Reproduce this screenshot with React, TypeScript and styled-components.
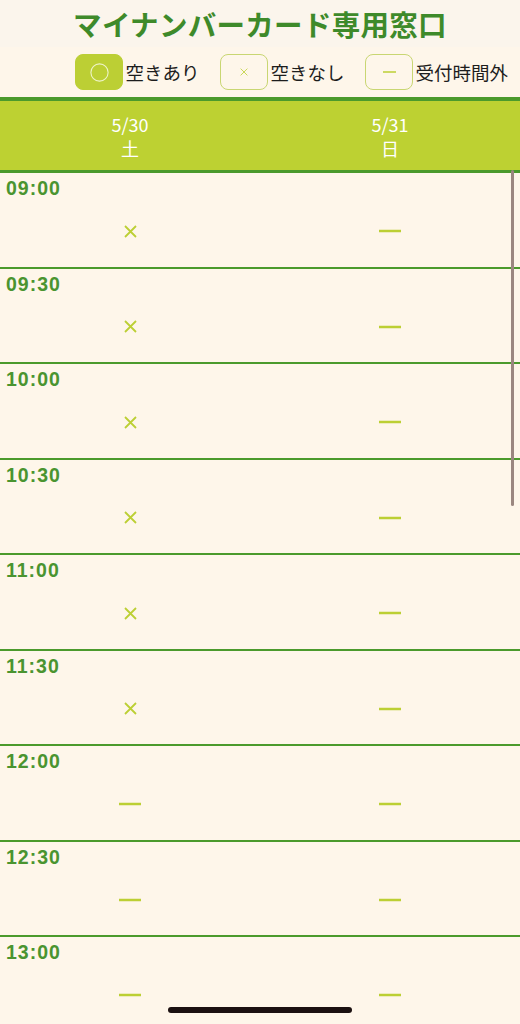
import React from "react";
import styled, { createGlobalStyle } from "styled-components";

type Mark = "ok" | "full" | "closed";

const slots: { time: string; marks: Mark[] }[] = [
  { time: "09:00", marks: ["full", "closed"] },
  { time: "09:30", marks: ["full", "closed"] },
  { time: "10:00", marks: ["full", "closed"] },
  { time: "10:30", marks: ["full", "closed"] },
  { time: "11:00", marks: ["full", "closed"] },
  { time: "11:30", marks: ["full", "closed"] },
  { time: "12:00", marks: ["closed", "closed"] },
  { time: "12:30", marks: ["closed", "closed"] },
  { time: "13:00", marks: ["closed", "closed"] },
];

const days = [
  { date: "5/30", day: "土" },
  { date: "5/31", day: "日" },
];

const GlobalStyle = createGlobalStyle`
  html, body {
    margin: 0;
    padding: 0;
    background: #fef6ea;
    overflow: hidden;
  }
  body {
    font-family: "Noto Sans CJK JP", "Noto Sans", sans-serif;
  }
`;

const Page = styled.div`
  position: relative;
  width: 520px;
  height: 1024px;
  overflow: hidden;
  background: #fef6ea;
`;

const TitleBar = styled.div`
  height: 47px;
  background: #fbf5ec;
  display: flex;
  align-items: center;
  justify-content: center;
`;

const Title = styled.h1`
  margin: 0;
  font-size: 28.5px;
  font-weight: 700;
  letter-spacing: 0.3px;
  color: #3e8a2a;
  line-height: 1;
  transform: translateY(1px);
`;

const Legend = styled.div`
  height: 50px;
  display: flex;
  align-items: center;
  justify-content: flex-end;
  padding-right: 12px;
  gap: 21px;
`;

const LegendItem = styled.div`
  display: flex;
  align-items: center;
  gap: 2px;
`;

const LegendBox = styled.div<{ $filled?: boolean }>`
  width: 48px;
  height: 36px;
  box-sizing: border-box;
  border-radius: 8px;
  display: flex;
  align-items: center;
  justify-content: center;
  background: ${(p) => (p.$filled ? "#bccf34" : "transparent")};
  border: 1.5px solid ${(p) => (p.$filled ? "#bccf34" : "#c9d672")};
`;

const LegendText = styled.span`
  font-size: 18.5px;
  color: #1d1d1d;
  line-height: 1;
`;

const Header = styled.div`
  display: grid;
  grid-template-columns: 1fr 1fr;
  background: #bdd132;
  border-top: 4px solid #4b9a2c;
  border-bottom: 3px solid #4b9a2c;
  height: 69px;
`;

const DayCell = styled.div`
  display: flex;
  flex-direction: column;
  align-items: center;
  padding-top: 11px;
  color: #ffffff;
  font-size: 18px;
  line-height: 24px;
`;

const Row = styled.div`
  height: 93.5px;
  border-bottom: 2px solid #4b9a2c;
  display: flex;
  flex-direction: column;
`;

const Time = styled.div`
  font-family: "Liberation Sans", "Noto Sans", sans-serif;
  font-weight: 700;
  font-size: 19.5px;
  letter-spacing: 1px;
  color: #4a9430;
  padding: 5px 0 0 6px;
  line-height: 20px;
`;

const Cells = styled.div`
  display: grid;
  grid-template-columns: 1fr 1fr;
  margin-top: 20px;
  height: 26px;
`;

const Cell = styled.div`
  display: flex;
  align-items: center;
  justify-content: center;
`;

const ScrollBar = styled.div`
  position: absolute;
  right: 6px;
  top: 170px;
  width: 3px;
  height: 336px;
  border-radius: 2px;
  background: #9b8780;
`;

const HomeIndicator = styled.div`
  position: absolute;
  left: 168px;
  bottom: 11px;
  width: 184px;
  height: 6px;
  border-radius: 3px;
  background: #1b1010;
`;

const Cross = ({ size = 13, color = "#bccf34", w = 1.8 }) => (
  <svg width={size} height={size} viewBox="0 0 13 13">
    <path d="M1 1 L12 12 M12 1 L1 12" stroke={color} strokeWidth={w} />
  </svg>
);

const Dash = ({ width = 22, color = "#bccf34", w = 2.5 }) => (
  <svg width={width} height={4} viewBox={`0 0 ${width} 4`}>
    <path d={`M0 2 H${width}`} stroke={color} strokeWidth={w} />
  </svg>
);

const Circle = () => (
  <svg width={19} height={19} viewBox="0 0 19 19">
    <circle cx="9.5" cy="9.5" r="8.6" fill="none" stroke="#eef3c8" strokeWidth="1.1" />
  </svg>
);

const MarkIcon = ({ mark }: { mark: Mark }) => {
  if (mark === "full") return <Cross />;
  if (mark === "closed") return <Dash />;
  return <Circle />;
};

export default function App() {
  return (
    <Page>
      <GlobalStyle />
      <TitleBar>
        <Title>マイナンバーカード専用窓口</Title>
      </TitleBar>
      <Legend>
        <LegendItem>
          <LegendBox $filled>
            <Circle />
          </LegendBox>
          <LegendText>空きあり</LegendText>
        </LegendItem>
        <LegendItem>
          <LegendBox>
            <Cross size={8} w={1.3} />
          </LegendBox>
          <LegendText>空きなし</LegendText>
        </LegendItem>
        <LegendItem>
          <LegendBox>
            <Dash width={13} w={1.5} />
          </LegendBox>
          <LegendText>受付時間外</LegendText>
        </LegendItem>
      </Legend>
      <Header>
        {days.map((d) => (
          <DayCell key={d.date}>
            <span>{d.date}</span>
            <span>{d.day}</span>
          </DayCell>
        ))}
      </Header>
      {slots.map((s) => (
        <Row key={s.time}>
          <Time>{s.time}</Time>
          <Cells>
            {s.marks.map((m, i) => (
              <Cell key={i}>
                <MarkIcon mark={m} />
              </Cell>
            ))}
          </Cells>
        </Row>
      ))}
      <ScrollBar />
      <HomeIndicator />
    </Page>
  );
}
